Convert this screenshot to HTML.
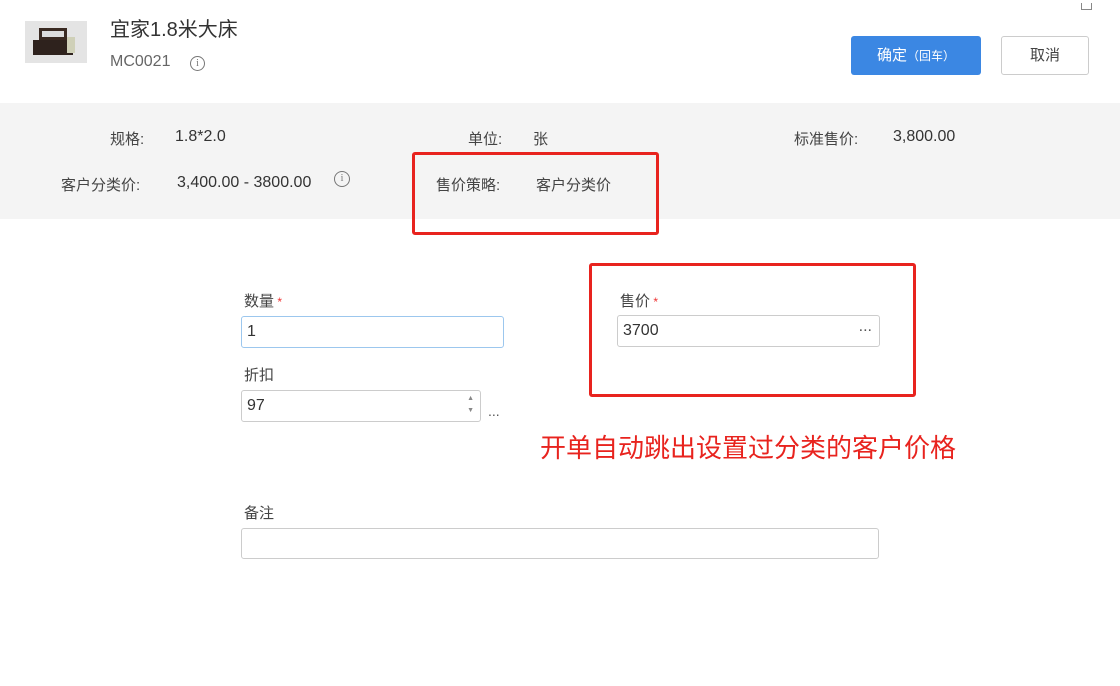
<!DOCTYPE html><html><head><meta charset="utf-8"><style>
body{margin:0;width:1120px;height:686px;background:#fff;font-family:"Liberation Sans","Noto Sans CJK SC",sans-serif;color:#333;position:relative;overflow:hidden}
.a{position:absolute;white-space:nowrap}
.inp{position:absolute;border:1px solid #ccc;border-radius:3px;box-sizing:border-box;background:#fff;font-size:16px;padding-left:5px;line-height:29px}
.lbl{font-size:15px;color:#444}
.v{font-size:16px;color:#333}
.red{position:absolute;border:3px solid #e8231e;border-radius:3px;box-sizing:border-box}
</style></head><body>
<div class="a" style="left:25px;top:21px;width:62px;height:42px;background:#e4e4e4">
 <div class="a" style="left:14px;top:7px;width:28px;height:12px;background:#3a2a22"></div>
 <div class="a" style="left:17px;top:10px;width:22px;height:6px;background:#ddd"></div>
 <div class="a" style="left:8px;top:19px;width:40px;height:15px;background:#2e221d"></div>
 <div class="a" style="left:42px;top:16px;width:8px;height:16px;background:#cfd0b8"></div>
</div>
<div class="a" style="left:110px;top:13px;font-size:20px;color:#333">宜家1.8米大床</div>
<div class="a" style="left:110px;top:53px;font-size:16px;color:#666">MC0021</div>
<div class="a" style="left:190px;top:56px;width:13px;height:13px;border:1px solid #777;border-radius:50%;font-size:10px;text-align:center;line-height:13px;color:#777;font-family:'Liberation Serif',serif">i</div>
<div class="a" style="left:1081px;top:3px;width:9px;height:6px;border-left:1px solid #888;border-right:1px solid #888;border-bottom:1px solid #888"></div>
<div class="a" style="left:851px;top:36px;width:130px;height:39px;background:#3b87e3;border-radius:3px;color:#fff;text-align:center;line-height:39px;font-size:15px">确定<span style="font-size:12px">（回车）</span></div>
<div class="a" style="left:1001px;top:36px;width:88px;height:39px;border:1px solid #ccc;border-radius:3px;box-sizing:border-box;text-align:center;line-height:37px;font-size:15px;color:#444">取消</div>
<div class="a" style="left:0;top:103px;width:1120px;height:116px;background:#f4f4f4"></div>
<div class="a lbl" style="left:110px;top:128px">规格:</div><div class="a v" style="left:175px;top:128px">1.8*2.0</div>
<div class="a lbl" style="left:468px;top:128px">单位:</div><div class="a lbl" style="left:533px;top:128px">张</div>
<div class="a lbl" style="left:794px;top:128px">标准售价:</div><div class="a v" style="left:893px;top:128px">3,800.00</div>
<div class="a lbl" style="left:61px;top:174px">客户分类价:</div><div class="a v" style="left:177px;top:174px">3,400.00 - 3800.00</div>
<div class="a" style="left:334px;top:171px;width:14px;height:14px;border:1px solid #777;border-radius:50%;font-size:10px;text-align:center;line-height:14px;color:#777;font-family:'Liberation Serif',serif">i</div>
<div class="a lbl" style="left:436px;top:174px">售价策略:</div><div class="a lbl" style="left:536px;top:174px">客户分类价</div>
<div class="red" style="left:412px;top:152px;width:247px;height:83px"></div>
<div class="a lbl" style="left:244px;top:290px">数量<span style="color:#e33;font-size:12px"> *</span></div>
<div class="inp" style="left:241px;top:316px;width:263px;height:32px;border-color:#9cc7ee">1</div>
<div class="a lbl" style="left:244px;top:364px">折扣</div>
<div class="inp" style="left:241px;top:390px;width:240px;height:32px">97<span style="position:absolute;right:6px;top:2px;font-size:7px;color:#888;line-height:12px">▲<br>▼</span></div>
<div class="a" style="left:488px;top:403px;font-size:14px;color:#555">...</div>
<div class="a lbl" style="left:620px;top:290px">售价<span style="color:#e33;font-size:12px"> *</span></div>
<div class="inp" style="left:617px;top:315px;width:263px;height:32px">3700<span style="position:absolute;right:7px;top:-4px;color:#555">...</span></div>
<div class="red" style="left:589px;top:263px;width:327px;height:134px"></div>
<div class="a" style="left:540px;top:428px;font-size:26px;color:#e8231e">开单自动跳出设置过分类的客户价格</div>
<div class="a lbl" style="left:244px;top:502px">备注</div>
<div class="inp" style="left:241px;top:528px;width:638px;height:31px"></div>
</body></html>
